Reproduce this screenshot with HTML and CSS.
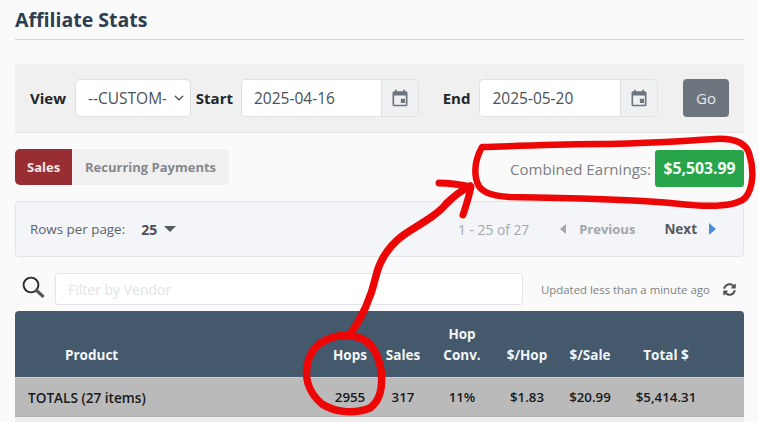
FILE: index.html
```html
<!DOCTYPE html>
<html lang="en">
<head>
<meta charset="utf-8">
<title>Affiliate Stats</title>
<link rel="stylesheet" href="styles.css">
</head>
<body>
<main class="page">
  <h1 class="title">Affiliate Stats</h1>
  <form class="filters">
    <label class="lbl">View</label>
    <div class="select"><span>--CUSTOM--</span>
      <svg class="chev" viewBox="0 0 16 16" width="10" height="10"><path d="M2 5l6 6 6-6" fill="none" stroke="#343a40" stroke-width="2" stroke-linecap="round" stroke-linejoin="round"/></svg>
    </div>
    <label class="lbl">Start</label>
    <div class="date date-start"><span class="date-val">2025-04-16</span><span class="date-btn"><svg viewBox="0 0 24 24" width="20" height="20"><path fill="#6c757d" d="M19 4h-1V2h-2v2H8V2H6v2H5a2 2 0 0 0-2 2v14a2 2 0 0 0 2 2h14a2 2 0 0 0 2-2V6a2 2 0 0 0-2-2zm0 16H5V9h14v11zm-6-7h5v5h-5z"/></svg></span></div>
    <label class="lbl lbl-end">End</label>
    <div class="date date-end"><span class="date-val">2025-05-20</span><span class="date-btn"><svg viewBox="0 0 24 24" width="20" height="20"><path fill="#6c757d" d="M19 4h-1V2h-2v2H8V2H6v2H5a2 2 0 0 0-2 2v14a2 2 0 0 0 2 2h14a2 2 0 0 0 2-2V6a2 2 0 0 0-2-2zm0 16H5V9h14v11zm-6-7h5v5h-5z"/></svg></span></div>
    <button class="go" type="button">Go</button>
  </form>

  <div class="tabrow">
    <div class="tabs"><span class="tab active">Sales</span><span class="tab">Recurring Payments</span></div>
    <div class="earn"><span>Combined Earnings:</span><span class="earn-val">$5,503.99</span></div>
  </div>

  <div class="pager">
    <div class="rows"><span>Rows per page:</span><b>25</b><i class="caret"></i></div>
    <div class="pages">
      <span class="count">1 - 25 of 27</span>
      <i class="tri-l"></i><b class="prev">Previous</b>
      <b class="next">Next</b><i class="tri-r"></i>
    </div>
  </div>

  <div class="filter">
    <svg class="mag" viewBox="0 0 24 24" width="24" height="24"><circle cx="10" cy="10" r="7.4" fill="none" stroke="#2b2b2b" stroke-width="1.9"/><path d="M15.6 15.6l6 5.4" stroke="#555" stroke-width="3.2" stroke-linecap="round"/></svg>
    <div class="filter-input">Filter by Vendor</div>
    <span class="updated">Updated less than a minute ago</span>
    <svg class="sync" viewBox="0 0 512 512" width="13" height="13"><path fill="#555" d="M370.7 133.300C339.500 104 298.900 88 255.800 88c-77.500 0-144.400 53.100-162.900 126.900-1.300 5.400-6.100 9.100-11.600 9.100H24.100c-7.500 0-13.200-6.800-11.800-14.200C33.900 94.900 134.800 8 256 8c66.400 0 126.800 26.100 171.300 68.700L463 41c15.100-15.100 41-4.400 41 17V192c0 13.300-10.700 24-24 24H345.900c-21.400 0-32.100-25.900-17-41l41.800-41.700zM32 296h134.100c21.400 0 32.100 25.900 17 41l-41.800 41.800c31.200 29.300 71.800 45.300 114.900 45.200 77.400-.1 144.300-53.100 162.900-126.800 1.300-5.400 6.100-9.100 11.600-9.100h57.300c7.500 0 13.200 6.800 11.800 14.200C478.100 417.100 377.200 504 256 504c-66.400 0-126.800-26.100-171.300-68.700L49 471c-15.100 15.100-41 4.400-41-17V320c0-13.300 10.700-24 24-24z"/></svg>
  </div>

  <table class="stats">
    <colgroup>
      <col class="c-prod"><col class="c-hops"><col class="c-sales"><col class="c-conv"><col class="c-hop"><col class="c-sale"><col class="c-total"><col class="c-end">
    </colgroup>
    <thead>
      <tr><th class="prod">Product</th><th>Hops</th><th>Sales</th><th>Hop<br><span class="conv">Conv.</span></th><th>$/Hop</th><th>$/Sale</th><th>Total $</th><th></th></tr>
    </thead>
    <tbody>
      <tr class="totals"><td class="name">TOTALS (27 items)</td><td>2955</td><td>317</td><td>11%</td><td>$1.83</td><td>$20.99</td><td>$5,414.31</td><td></td></tr>
      <tr class="next-row"><td colspan="8"></td></tr>
    </tbody>
  </table>
</main>

<svg class="scribble" viewBox="0 0 758 422" width="758" height="422" fill="none" stroke="#ec0606" stroke-linecap="round" stroke-linejoin="round">
  <path stroke-width="6.500" d="M482 147C477 156 474 167 476 178C478 192 490 196 510 197C560 198 625 198 680 204C708 207 735 207 745 198C754 188 754 168 749 153C745 142 734 138 715 139C680 141 640 144 600 144C560 144 520 146 482 147Z"/>
  <path stroke-width="7.500" d="M349 336C362 318 371 298 376 276C380 258 392 242 408 232C424 222 438 214 446 204C454 196 462 190 470 186"/>
  <path stroke-width="7" d="M439 183C450 183 462 185 471 187C469 196 466 206 463 215"/>
  <path stroke-width="7.500" d="M352 336C335 334 316 340 309 358C303 376 308 392 322 404C336 413 356 414 370 408C381 400 383 386 381 370C378 352 370 338 352 336Z"/>
</svg>
</body>
</html>
```
FILE: styles.css
```css
* { box-sizing: border-box; }
html, body { margin: 0; padding: 0; }
body {
  width: 758px;
  height: 422px;
  overflow: hidden;
  position: relative;
  background: #fafafa;
  font-family: "Open Sans", "Noto Sans", "Liberation Sans", sans-serif;
  color: #212529;
}
.page { padding: 0 14px 0 15px; }
.title {
  margin: 0;
  height: 40px;
  padding-top: 6px;
  font-size: 19.500px;
  line-height: 28px;
  font-weight: 700;
  color: #2c3e4f;
  border-bottom: 1px solid #cfd3d6;
}
.filters {
  margin-top: 24px;
  height: 69px;
  background: #f0f0f0;
  border-bottom: 1px solid #e4e4e4;
  border-radius: 3px;
  display: flex;
  align-items: center;
  padding: 0 15px;
}
.lbl { font-size: 15px; font-weight: 700; color: #212529; }
.select {
  margin-left: 9px;
  margin-right: 5px;
  width: 116px;
  height: 38px;
  background: #fff;
  border: 1px solid #dee2e6;
  border-radius: 5px;
  padding-left: 12px;
  font-size: 15.500px;
  line-height: 36px;
  color: #495057;
  display: flex;
  align-items: center;
  overflow: hidden;
  position: relative;
}
.select span { white-space: nowrap; width: 78px; overflow: hidden; }
.chev { position: absolute; right: 6px; top: 13px; }
.date {
  display: flex;
  height: 38px;
  margin-left: 8px;
  border: 1px solid #dee2e6;
  border-radius: 5px;
  overflow: hidden;
}
.date-start { width: 178px; }
.date-end { width: 179px; margin-left: 9px; }
.date-val {
  flex: 1;
  background: #fff;
  padding-left: 12px;
  font-size: 15.500px;
  line-height: 36px;
  color: #495057;
}
.date-btn {
  width: 37px;
  background: #eff0f1;
  border-left: 1px solid #dee2e6;
  display: flex;
  align-items: center;
  justify-content: center;
}
.lbl-end { margin-left: 24px; }
.go {
  margin-left: 25px;
  width: 46px;
  height: 38px;
  background: #6c757d;
  border: 0;
  border-radius: 4px;
  color: #e6e8ea;
  font: 400 15px "Open Sans", "Noto Sans", sans-serif;
  padding: 0;
}
.tabrow {
  margin-top: 16px;
  height: 52px;
  display: flex;
  justify-content: space-between;
  align-items: flex-start;
}
.tabs {
  display: flex;
  height: 36px;
  width: 214px;
  background: #f0f0f0;
  border-radius: 5px;
  overflow: hidden;
  font-size: 13px;
  font-weight: 700;
}
.tab { padding: 0 13px; line-height: 36px; color: #85888b; white-space: nowrap; }
.tab.active { background: #982e33; color: #f4e6e6; padding: 0 12px; width: 57px; }
.earn {
  margin-top: 1px;
  display: flex;
  align-items: center;
  font-size: 15.100px;
  color: #7b8085;
  gap: 4px;
}
.earn-val {
  background: #28a54a;
  color: #f2faf4;
  font-weight: 700;
  font-size: 15.800px;
  width: 89px;
  height: 37px;
  line-height: 37px;
  text-align: center;
  border-radius: 3px;
}
.pager {
  height: 56px;
  background: #f4f5f8;
  border: 1px solid #e3e5e8;
  border-radius: 4px;
  display: flex;
  justify-content: space-between;
  align-items: center;
  padding: 0 27px 0 14px;
}
.rows { display: flex; align-items: center; font-size: 13.400px; color: #5d6369; }
.rows b { margin-left: 16px; font-size: 14px; color: #4a5056; }
.caret {
  margin-left: 7px;
  width: 0; height: 0;
  border-left: 6.500px solid transparent;
  border-right: 6.500px solid transparent;
  border-top: 6px solid #555b61;
}
.pages { display: flex; align-items: center; font-size: 13.500px; }
.count { color: #a3a7ab; font-size: 13.800px; margin-right: 31px; }
.tri-l {
  width: 0; height: 0; margin-right: 13px;
  border-top: 5.500px solid transparent;
  border-bottom: 5.500px solid transparent;
  border-right: 6px solid #a3a8ac;
}
.prev { color: #a2a6aa; font-size: 13px; }
.next { color: #55595e; margin-left: 29px; }
.tri-r {
  width: 0; height: 0; margin-left: 12px;
  border-top: 6px solid transparent;
  border-bottom: 6px solid transparent;
  border-left: 7px solid #4a90d9;
}
.filter {
  height: 54px;
  padding-top: 10px;
  display: flex;
  align-items: center;
}
.mag { margin-left: 6px; margin-top: -5px; }
.filter-input {
  margin-left: 10px;
  width: 468px;
  height: 32px;
  background: #fff;
  border: 1px solid #e3e5e8;
  border-radius: 3px;
  padding-left: 12px;
  line-height: 31px;
  font-size: 14px;
  color: #e2e4e6;
}
.updated { margin-left: 18px; font-size: 11.400px; color: #7d8185; white-space: nowrap; }
.sync { margin-left: 13px; }
.stats {
  width: 729px;
  table-layout: fixed;
  border-collapse: collapse;
}
.c-prod { width: 310px; }
.c-hops { width: 50px; }
.c-sales { width: 56px; }
.c-conv { width: 62px; }
.c-hop { width: 68px; }
.c-sale { width: 58px; }
.c-total { width: 94px; }
.c-end { width: 31px; }
.stats thead tr { background: #44596b; }
.stats th {
  height: 66px;
  padding: 0 0 11px;
  vertical-align: bottom;
  text-align: center;
  color: #f3f5f7;
  font-size: 13.500px;
  line-height: 21px;
  font-weight: 700;
  border-bottom: 1px solid #c9ced2;
}
.stats th:first-child { border-top-left-radius: 4px; }
.stats th:last-child { border-top-right-radius: 4px; }
.stats th.prod { text-align: left; padding-left: 50px; }
.totals td {
  height: 39px;
  padding-top: 2px;
  background: #bababa;
  text-align: center;
  font-size: 13.300px;
  font-weight: 600;
  color: #16191c;
  border-bottom: 1px solid #b0b0b0;
}
.totals td.name { text-align: left; padding-left: 13px; font-size: 13.600px; }
.next-row td { height: 10px; background: #eeeeee; }
.scribble { position: absolute; left: 0; top: 0; pointer-events: none; }
```
